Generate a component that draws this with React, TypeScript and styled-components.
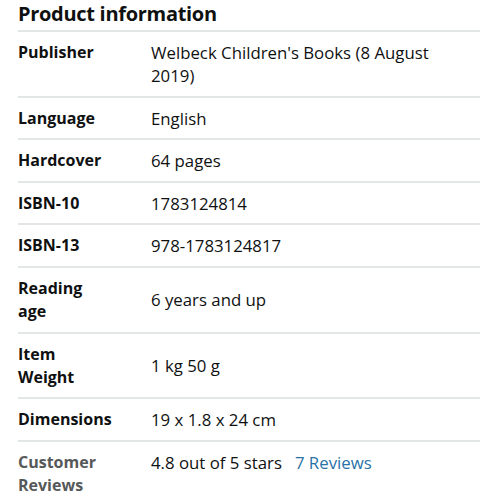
import styled, { createGlobalStyle } from 'styled-components';

const GlobalStyle = createGlobalStyle`
  body {
    margin: 0;
    background: #fff;
    font-family: "Open Sans", "Noto Sans", Arial, sans-serif;
    color: #0f1111;
  }
`;

type Row = { label: string; value: string; muted?: boolean; reviews?: string };

const rows: Row[] = [
  { label: 'Publisher', value: "Welbeck Children's Books (8 August 2019)" },
  { label: 'Language', value: 'English' },
  { label: 'Hardcover', value: '64 pages' },
  { label: 'ISBN-10', value: '1783124814' },
  { label: 'ISBN-13', value: '978-1783124817' },
  { label: 'Reading age', value: '6 years and up' },
  { label: 'Item Weight', value: '1 kg 50 g' },
  { label: 'Dimensions', value: '19 x 1.8 x 24 cm' },
  { label: 'Customer Reviews', value: '4.8 out of 5 stars', muted: true, reviews: '7 Reviews' },
];

const App: React.FC = () => {
  return (
    <>
      <GlobalStyle />
      <Section>
        <Title>Product information</Title>
        <Table>
          {rows.map((r) => (
            <InfoRow key={r.label}>
              <Label $muted={r.muted}>{r.label}</Label>
              <Value $top={!!r.reviews}>
                {r.value}
                {r.reviews && <ReviewLink href="#">{r.reviews}</ReviewLink>}
              </Value>
            </InfoRow>
          ))}
        </Table>
      </Section>
    </>
  );
};

const Section = styled.div`
  padding: 0 9px 0 18px;
`;

const Title = styled.h2`
  margin: 0;
  font-size: 20px;
  font-weight: 700;
  line-height: 28px;
  padding-bottom: 2px;
  letter-spacing: -0.3px;
`;

const Table = styled.div`
  border-top: 2px solid #e3e6e6;
`;

const InfoRow = styled.div`
  display: grid;
  grid-template-columns: 133px 1fr;
  align-items: center;
  padding: 9px 0 8.6px;
  border-bottom: 2px solid #e3e6e6;
  line-height: 23px;
`;

const Label = styled.div<{ $muted?: boolean }>`
  align-self: start;
  font-size: 16px;
  font-weight: 700;
  color: ${(p) => (p.$muted ? '#565959' : '#0f1111')};
  max-width: 90px;
`;

const Value = styled.div<{ $top?: boolean }>`
  align-self: ${(p) => (p.$top ? 'start' : 'center')};
  font-size: 16.8px;
  color: #0f1111;
  padding-right: 30px;
`;

const ReviewLink = styled.a`
  color: #2a72a8;
  text-decoration: none;
  margin-left: 13px;
`;

export default App;
